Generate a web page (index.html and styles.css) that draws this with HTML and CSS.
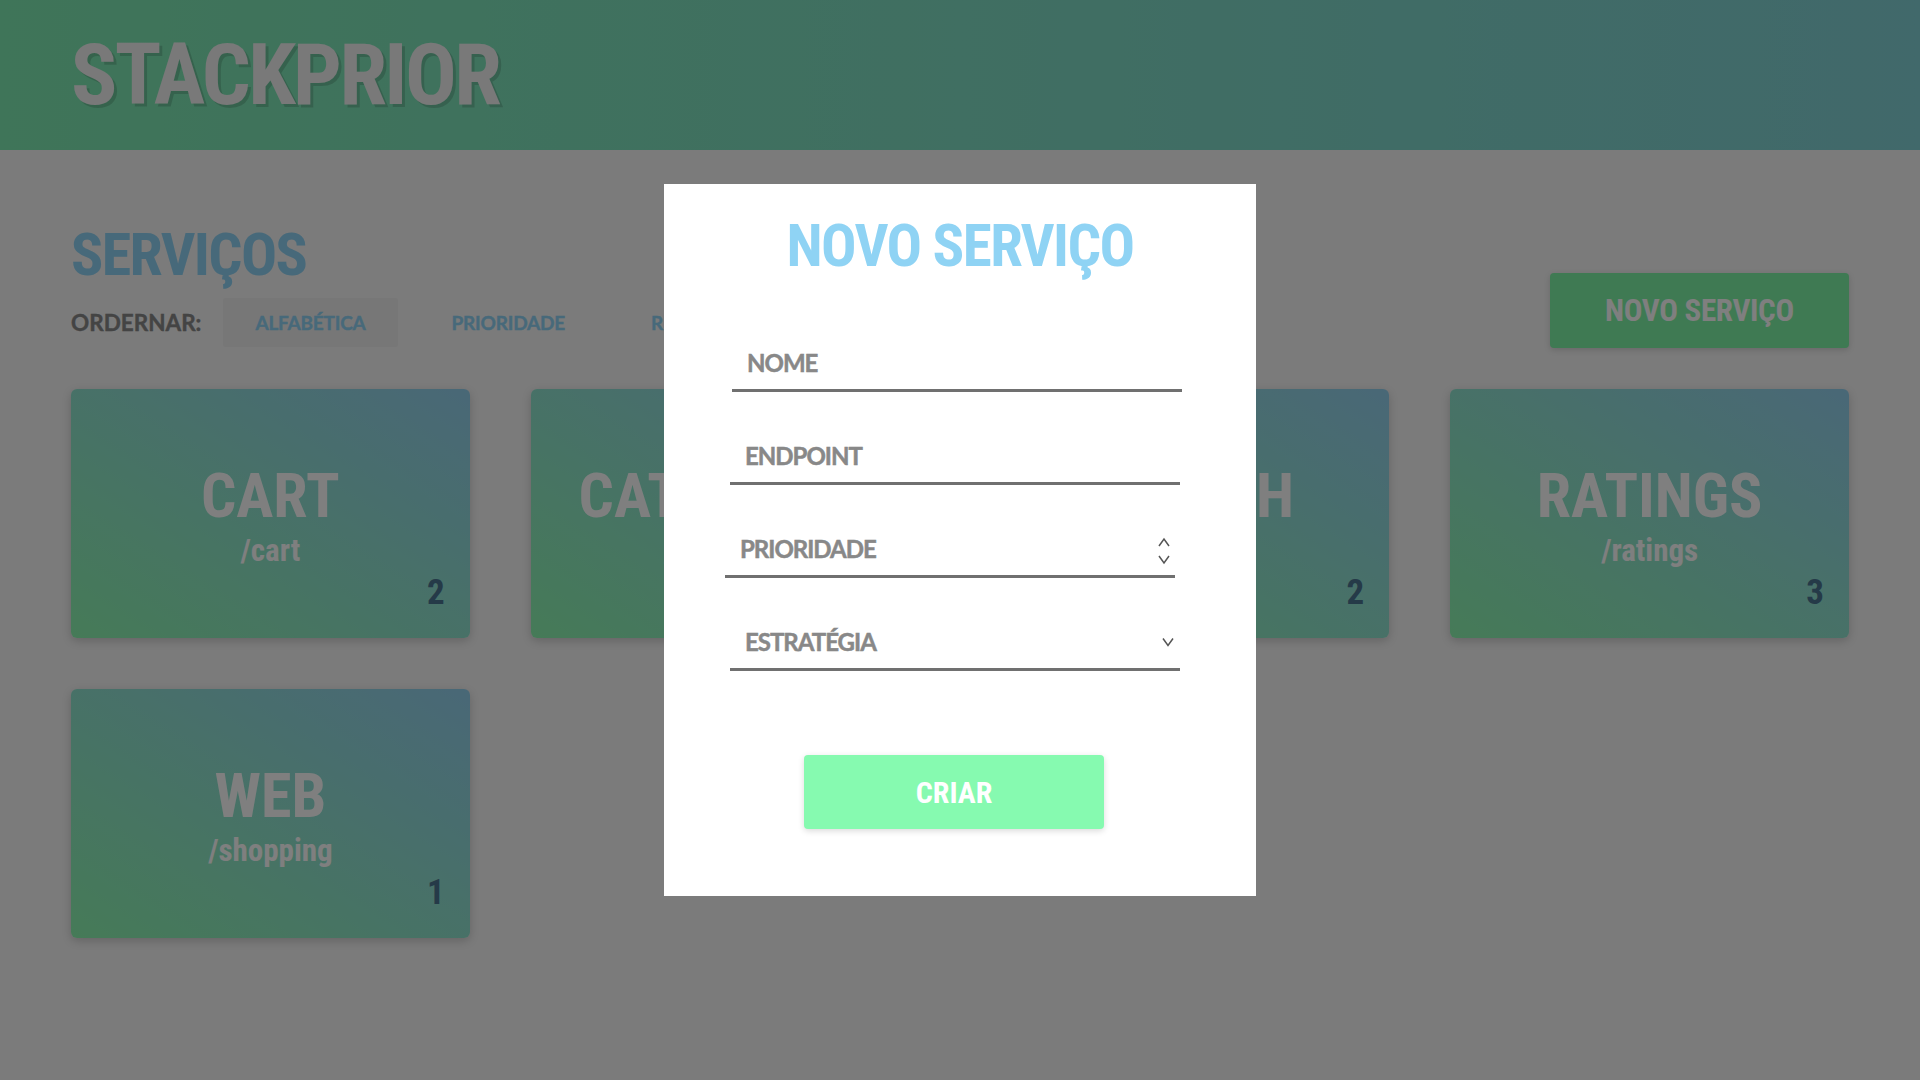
FILE: index.html
```html
<!DOCTYPE html>
<html lang="pt-BR">
<head>
<meta charset="utf-8">
<title>StackPrior</title>
<link rel="stylesheet" href="styles.css">
</head>
<body>
<header class="topbar">
  <h1 class="brand">STACKPRIOR</h1>
</header>
<main class="content">
  <section class="toolbar">
    <div class="toolbar-left">
      <h2 class="section-title">SERVIÇOS</h2>
      <div class="sort">
        <span class="sort-label">ORDERNAR:</span>
        <button class="sort-btn active">ALFABÉTICA</button>
        <button class="sort-btn">PRIORIDADE</button>
        <button class="sort-btn">RECENTES</button>
      </div>
    </div>
    <button class="new-btn">NOVO SERVIÇO</button>
  </section>
  <section class="grid">
    <article class="card"><div class="card-name">CART</div><div class="card-path">/cart</div><div class="card-prio">2</div></article>
    <article class="card"><div class="card-name">CATALOGUE</div><div class="card-path">/catalogue</div><div class="card-prio">1</div></article>
    <article class="card"><div class="card-name">SEARCH</div><div class="card-path">/search</div><div class="card-prio">2</div></article>
    <article class="card"><div class="card-name">RATINGS</div><div class="card-path">/ratings</div><div class="card-prio">3</div></article>
    <article class="card"><div class="card-name">WEB</div><div class="card-path">/shopping</div><div class="card-prio">1</div></article>
  </section>
</main>
<div class="overlay">
  <div class="modal">
    <h2 class="modal-title">NOVO SERVIÇO</h2>
    <div class="field f-nome"><span class="field-text">NOME</span></div>
    <div class="field f-endpoint"><span class="field-text">ENDPOINT</span></div>
    <div class="field f-prio"><span class="field-text">PRIORIDADE</span>
      <svg class="spin" width="12" height="28" viewBox="0 0 12 28"><path d="M1 9 L6 2 L11 9" fill="none" stroke="#555" stroke-width="1.5"/><path d="M1 19 L6 26 L11 19" fill="none" stroke="#555" stroke-width="1.5"/></svg>
    </div>
    <div class="field f-estr"><span class="field-text">ESTRATÉGIA</span>
      <svg class="chev" width="12" height="10" viewBox="0 0 12 10"><path d="M1 1.5 L6 8.5 L11 1.5" fill="none" stroke="#555" stroke-width="1.5"/></svg>
    </div>
    <button class="create-btn">CRIAR</button>
  </div>
</div>
</body>
</html>
```
FILE: styles.css
```css
* { box-sizing: border-box; }
html, body { margin: 0; padding: 0; }
body {
  width: 1920px;
  height: 1080px;
  overflow: hidden;
  background: #f6f6f6;
  font-family: "Roboto Condensed", "Roboto", "Liberation Sans Narrow", sans-serif;
  font-stretch: 75%;
}
.topbar {
  height: 150px;
  padding-left: 71px;
  display: flex;
  align-items: center;
  background: linear-gradient(90deg, #7eeab2 0%, #82d2d6 100%);
}
.brand {
  margin: 0;
  font-size: 86px;
  font-weight: 700;
  color: #f2f2f2;
  letter-spacing: -2.6px;
  text-shadow: 3px 3px 0 rgba(0,0,0,0.15);
  line-height: 1;
}
.content { padding: 0 71px; }
.toolbar {
  display: flex;
  justify-content: space-between;
  align-items: flex-start;
  height: 239px;
}
.toolbar-left { padding-top: 75px; }
.section-title {
  margin: 0;
  font-size: 60px;
  line-height: 1;
  font-weight: 700;
  letter-spacing: -1.6px;
  color: #8fd3f4;
}
.sort {
  display: flex;
  align-items: center;
  margin-top: 13px;
  gap: 22px;
  font-family: "Lato", "Open Sans", sans-serif;
  font-stretch: 100%;
}
.sort-label {
  font-size: 22.5px;
  font-weight: 700;
  color: #888;
  -webkit-text-stroke: 0.4px #888;
}
.sort-btn {
  border: 0;
  background: transparent;
  font-family: inherit;
  font-stretch: 100%;
  font-size: 19px;
  letter-spacing: -0.2px;
  font-weight: 700;
  color: #8fd3f4;
  -webkit-text-stroke: 0.4px #8fd3f4;
  height: 49px;
  padding: 0 32px;
  border-radius: 3px;
}
.sort-btn.active { background: #eeeeee; }
.new-btn {
  margin-top: 123px;
  width: 299px;
  height: 75px;
  border: 0;
  border-radius: 4px;
  background: #7ef4a6;
  color: #fff;
  font-family: inherit;
  font-stretch: 75%;
  font-size: 31px;
  letter-spacing: -0.3px;
  font-weight: 700;
  box-shadow: 0 2px 6px rgba(0,0,0,0.15);
}
.grid {
  display: grid;
  grid-template-columns: repeat(4, 1fr);
  column-gap: 61px;
  row-gap: 51px;
}
.card {
  position: relative;
  height: 249px;
  border-radius: 6px;
  background: linear-gradient(to top right, #8cf6b0, #93d0ee);
  box-shadow: 0 3px 10px rgba(0,0,0,0.18);
  color: #fff;
  text-align: center;
  padding-top: 76px;
}
.card-name {
  font-size: 62px;
  font-weight: 700;
  line-height: 1;
}
.card-path {
  font-size: 31px;
  font-weight: 700;
  line-height: 1;
  margin-top: 8px;
}
.card-prio {
  position: absolute;
  right: 25px;
  bottom: 28px;
  font-size: 35px;
  font-weight: 700;
  line-height: 1;
  color: #4a7490;
}
.overlay {
  position: fixed;
  inset: 0;
  background: rgba(0,0,0,0.5);
  display: flex;
  align-items: center;
  justify-content: center;
}
.modal {
  width: 592px;
  height: 712px;
  background: #fff;
  display: flex;
  flex-direction: column;
  align-items: flex-start;
  padding-top: 32px;
}
.modal-title {
  align-self: center;
  margin: 0;
  font-size: 59px;
  line-height: 1;
  font-weight: 700;
  letter-spacing: -1.6px;
  color: #8fd3f4;
  height: 59px;
}
.field {
  width: 450px;
  height: 93px;
  border-bottom: 3px solid #707070;
  display: flex;
  align-items: flex-end;
  justify-content: space-between;
  padding: 0 6px 14px 15px;
  font-family: "Lato", "Open Sans", sans-serif;
  font-stretch: 100%;
}
.f-nome { margin-left: 68px; height: 93px; margin-top: 24px; }
.f-endpoint { margin-left: 66px; }
.f-prio { margin-left: 61px; padding-right: 5px; }
.f-estr { margin-left: 66px; }
.field-text {
  font-size: 24px;
  font-weight: 700;
  letter-spacing: -1px;
  color: #888;
  -webkit-text-stroke: 0.5px #888;
  line-height: 1;
}
.spin { margin-bottom: -4px; }
.chev { margin-bottom: 7px; }
.create-btn {
  margin-top: 84px;
  margin-left: 140px;
  width: 300px;
  height: 74px;
  border: 0;
  border-radius: 4px;
  background: #86fab0;
  color: #fff;
  font-family: "Roboto Condensed", "Roboto", sans-serif;
  font-stretch: 75%;
  font-size: 30px;
  font-weight: 700;
  box-shadow: 0 2px 6px rgba(0,0,0,0.15);
}
```
